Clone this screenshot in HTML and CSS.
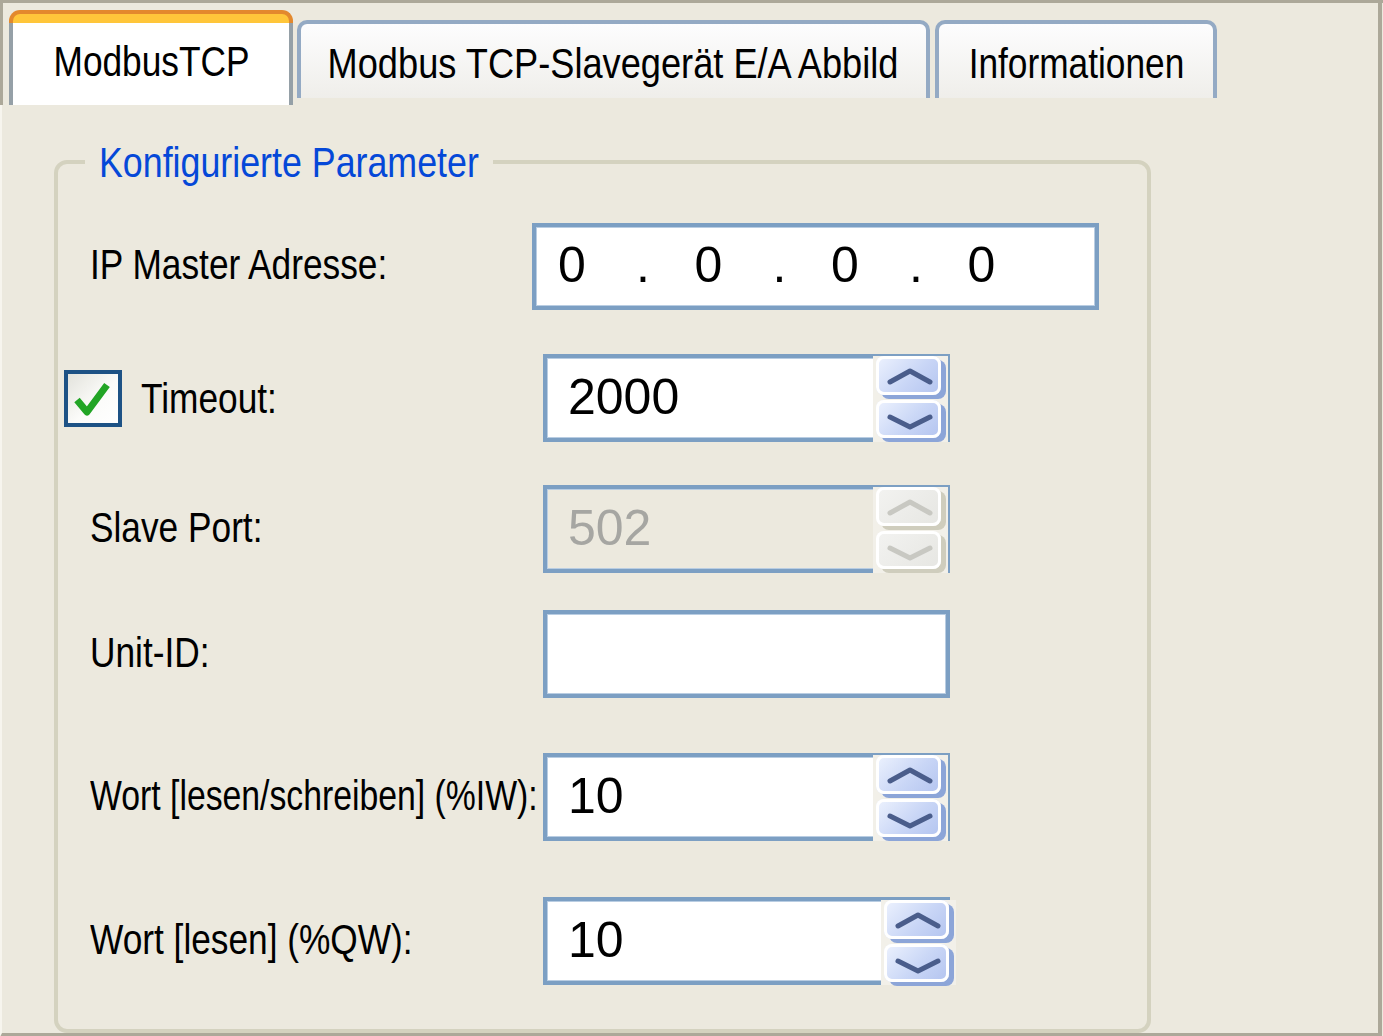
FILE: index.html
```html
<!DOCTYPE html>
<html lang="de">
<head>
<meta charset="utf-8">
<title>ModbusTCP</title>
<link rel="stylesheet" href="styles.css">
</head>
<body>
<div class="window">
  <div class="tabstrip">
    <div class="tab tab-active">
      <div class="tab-cap"></div>
      <div class="tab-body"><span class="nx nx-c">ModbusTCP</span></div>
    </div>
    <div class="tab tab-2"><span class="nx nx-c nx-wide">Modbus TCP-Slavegerät E/A Abbild</span></div>
    <div class="tab tab-3"><span class="nx nx-c">Informationen</span></div>
  </div>
  <div class="panel">
    <fieldset class="group">
      <legend class="group-title"><span class="nx nx-legend">Konfigurierte Parameter</span></legend>

      <div class="row row-ip">
        <div class="label"><span class="nx">IP Master Adresse:</span></div>
        <div class="field field-ip">
          <span class="oct">0</span><span class="dot">.</span><span class="oct">0</span><span class="dot">.</span><span class="oct">0</span><span class="dot">.</span><span class="oct">0</span>
        </div>
      </div>

      <div class="row row-timeout">
        <div class="label label-cb">
          <span class="cb"><svg viewBox="0 0 50 49" width="50" height="49"><polyline points="9,26 19,38 39,11" fill="none" stroke="#22a525" stroke-width="7" stroke-linejoin="round"/></svg></span>
          <span class="nx">Timeout:</span>
        </div>
        <div class="field">
          <span class="val">2000</span>
          <div class="spin">
            <div class="sbtn up"><svg viewBox="0 0 65 39" width="65" height="39"><polyline points="14,26 34,15 54,26" fill="none" stroke="#4a5d8b" stroke-width="5" stroke-linecap="round" stroke-linejoin="round"/></svg></div>
            <div class="sbtn down"><svg viewBox="0 0 65 38" width="65" height="38"><polyline points="14,17 34,27 54,17" fill="none" stroke="#4a5d8b" stroke-width="5" stroke-linecap="round" stroke-linejoin="round"/></svg></div>
          </div>
        </div>
      </div>

      <div class="row row-port">
        <div class="label"><span class="nx">Slave Port:</span></div>
        <div class="field field-disabled">
          <span class="val">502</span>
          <div class="spin spin-disabled">
            <div class="sbtn up"><svg viewBox="0 0 65 39" width="65" height="39"><polyline points="14,26 34,15 54,26" fill="none" stroke="#c8c8c2" stroke-width="5" stroke-linecap="round" stroke-linejoin="round"/></svg></div>
            <div class="sbtn down"><svg viewBox="0 0 65 38" width="65" height="38"><polyline points="14,17 34,27 54,17" fill="none" stroke="#c8c8c2" stroke-width="5" stroke-linecap="round" stroke-linejoin="round"/></svg></div>
          </div>
        </div>
      </div>

      <div class="row row-unit">
        <div class="label"><span class="nx">Unit-ID:</span></div>
        <div class="field"></div>
      </div>

      <div class="row row-iw">
        <div class="label"><span class="nx nx-tight">Wort [lesen/schreiben] (%IW):</span></div>
        <div class="field">
          <span class="val">10</span>
          <div class="spin">
            <div class="sbtn up"><svg viewBox="0 0 65 39" width="65" height="39"><polyline points="14,26 34,15 54,26" fill="none" stroke="#4a5d8b" stroke-width="5" stroke-linecap="round" stroke-linejoin="round"/></svg></div>
            <div class="sbtn down"><svg viewBox="0 0 65 38" width="65" height="38"><polyline points="14,17 34,27 54,17" fill="none" stroke="#4a5d8b" stroke-width="5" stroke-linecap="round" stroke-linejoin="round"/></svg></div>
          </div>
        </div>
      </div>

      <div class="row row-qw">
        <div class="label"><span class="nx">Wort [lesen] (%QW):</span></div>
        <div class="field">
          <span class="val">10</span>
          <div class="spin spin-shift">
            <div class="sbtn up"><svg viewBox="0 0 65 39" width="65" height="39"><polyline points="14,26 34,15 54,26" fill="none" stroke="#4a5d8b" stroke-width="5" stroke-linecap="round" stroke-linejoin="round"/></svg></div>
            <div class="sbtn down"><svg viewBox="0 0 65 38" width="65" height="38"><polyline points="14,17 34,27 54,17" fill="none" stroke="#4a5d8b" stroke-width="5" stroke-linecap="round" stroke-linejoin="round"/></svg></div>
          </div>
        </div>
      </div>
    </fieldset>
  </div>
</div>
</body>
</html>
```

FILE: styles.css
```css
html, body {
  margin: 0;
  padding: 0;
  background: #ece9de;
}

body {
  font-family: "Liberation Sans", Arial, sans-serif;
  font-size: 43px;
  color: #000;
}

/* condensed (Arial Narrow-like) text */
.nx {
  display: inline-block;
  white-space: nowrap;
  transform: scaleX(0.82);
  transform-origin: 0 50%;
}

.nx-c {
  transform-origin: 50% 50%;
  flex: none;
}

.nx-wide {
  transform: scaleX(0.842);
}

.nx-legend {
  transform: scaleX(0.832);
}

.nx-tight {
  transform: scaleX(0.785);
}

.window {
  width: 1383px;
  height: 1036px;
  box-sizing: border-box;
  border-top: 3px solid #aca899;
  display: flex;
  flex-direction: column;
}

/* ---------- tabs ---------- */
.tabstrip {
  height: 102px;
  width: 1382px;
  box-sizing: border-box;
  border-left: 3px solid #aca899;
  border-right: 4px solid #aca899;
  display: flex;
  align-items: flex-start;
  padding-left: 6px;
}

.tab {
  box-sizing: border-box;
  line-height: 48px;
  white-space: nowrap;
}

.tab-active {
  margin-top: 7px;
  width: 284px;
  height: 95px;
  display: flex;
  flex-direction: column;
}

.tab-cap {
  height: 13px;
  box-sizing: border-box;
  background: #ffc63a;
  border: 4px solid #e3892d;
  border-bottom: 0;
  border-radius: 11px 11px 0 0;
}

.tab-body {
  flex: 1;
  background: #fff;
  border-left: 4px solid #95a0a7;
  border-right: 4px solid #95a0a7;
  padding-top: 14px;
  display: flex;
  justify-content: center;
  align-items: flex-start;
}

.tab-2,
.tab-3 {
  margin-top: 17px;
  height: 78px;
  border: 4px solid #94aac4;
  border-bottom: 0;
  border-radius: 10px 10px 0 0;
  background: linear-gradient(#fdfdfe, #efeeea);
  padding-top: 15px;
  display: flex;
  justify-content: center;
  align-items: flex-start;
}

.tab-2 {
  margin-left: 4px;
  width: 633px;
}

.tab-3 {
  margin-left: 5px;
  width: 282px;
}

/* ---------- panel ---------- */
.panel {
  flex: 1;
  width: 1382px;
  box-sizing: border-box;
  border-left: 2px solid #f7f5ee;
  border-right: 4px solid #aca899;
  border-bottom: 4px solid #aca899;
  display: flex;
  flex-direction: column;
}

.group {
  box-sizing: border-box;
  margin: 37px 0 0 52px;
  width: 1097px;
  height: 891px;
  padding: 0;
  border: 4px solid #d4d2bf;
  border-radius: 13px;
  min-width: 0;
}

.group-title {
  box-sizing: border-box;
  margin-left: 27px;
  width: 408px;
  padding: 0 14px;
  line-height: 40px;
  color: #0548d8;
  white-space: nowrap;
}

.row {
  display: flex;
  align-items: center;
  height: 88px;
  padding-left: 32px;
}

.row-ip { margin-top: 40px; }
.row-timeout { margin-top: 44px; }
.row-port { margin-top: 43px; }
.row-unit { margin-top: 37px; }
.row-iw { margin-top: 55px; }
.row-qw { margin-top: 56px; }

.label {
  width: 453px;
  flex: none;
  white-space: nowrap;
  margin-top: -3px;
}

.label-cb {
  display: flex;
  align-items: center;
  margin-left: -26px;
  margin-top: 0;
  width: 479px;
}

.cb {
  box-sizing: border-box;
  width: 58px;
  height: 57px;
  border: 4px solid #1d5285;
  background: linear-gradient(135deg, #e3e3dc, #fbfbf9 55%, #ffffff);
  margin-right: 19px;
  display: block;
  flex: none;
}

.cb svg {
  display: block;
}

/* ---------- fields ---------- */
.field {
  position: relative;
  box-sizing: border-box;
  width: 407px;
  height: 88px;
  border: 4px solid #7c9fc3;
  box-shadow: inset 0 0 0 1px #b9cde2;
  background: #fff;
  display: flex;
  align-items: center;
  padding-left: 21px;
  font-size: 50px;
  flex: none;
}

.val {
  margin-top: -3px;
}

.field-ip {
  margin-left: -11px;
  width: 567px;
  height: 87px;
  padding-left: 22px;
}

.oct {
  display: inline-block;
  width: 78px;
  margin-top: -3px;
}

.dot {
  display: inline-block;
  width: 58.5px;
  margin-top: -3px;
}

.field-disabled {
  background: #ece9de;
  color: #a6a6a2;
}

.spin {
  position: absolute;
  top: -2px;
  right: -2px;
  bottom: -4px;
  width: 75px;
  background: #f2f0e9;
}

.spin-shift {
  right: -10px;
  top: -1px;
}

.sbtn {
  position: absolute;
  left: 3px;
  width: 65px;
  border-radius: 8px;
  background: linear-gradient(135deg, #eef3fe, #c9d6f6 55%, #b2c3ef);
  box-shadow: inset 0 0 0 3px #fff, 5px 4px 0 #8ca5d8;
}

.sbtn svg {
  display: block;
}

.sbtn.up {
  top: 0;
  height: 39px;
}

.sbtn.down {
  top: 44px;
  height: 38px;
}

.spin-disabled .sbtn {
  background: linear-gradient(135deg, #f3f3f1, #e6e6e2);
  box-shadow: inset 0 0 0 3px #fff, 5px 4px 0 #cfcdbd;
}
```
